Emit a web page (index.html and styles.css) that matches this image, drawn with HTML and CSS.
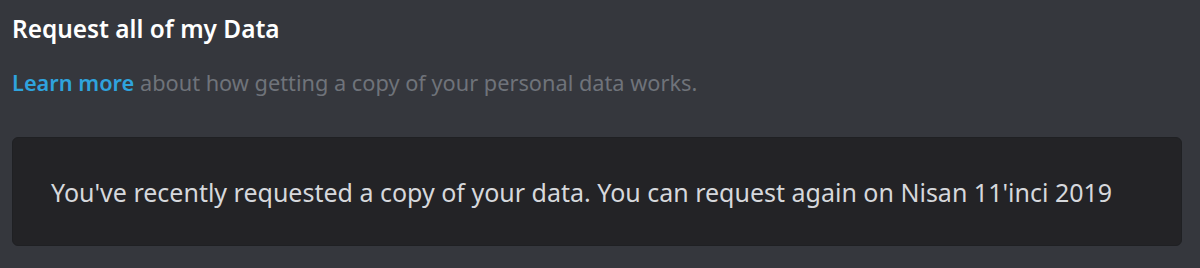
FILE: index.html
```html
<!DOCTYPE html>
<html>
<head>
<meta charset="utf-8">
<link rel="stylesheet" href="styles.css">
</head>
<body>
<div class="page">
  <h1 class="title">Request all of my Data</h1>
  <p class="desc"><a class="link">Learn more</a> about how getting a copy of your personal data works.</p>
  <div class="notice">You've recently requested a copy of your data. You can request again on Nisan 11'inci 2019</div>
</div>
</body>
</html>
```
FILE: styles.css
```css
html, body {
  margin: 0;
  padding: 0;
  background: #35373d;
  width: 1200px;
  height: 268px;
  overflow: hidden;
}
.page {
  padding: 12px 18px 0 12px;
  font-family: "Noto Sans", Lato, sans-serif;
}
.title {
  margin: 0;
  font-size: 24.4px;
  font-weight: 600;
  color: #ffffff;
  line-height: 34px;
}
.desc {
  margin: 23px 0 0 0;
  font-size: 21.75px;
  line-height: 28px;
  color: #6f737a;
}
.link {
  color: #2fa3dd;
  font-weight: 600;
}
.notice {
  margin-top: 40px;
  height: 109px;
  box-sizing: border-box;
  background: #232326;
  border: 1px solid #1f2023;
  border-radius: 6px;
  padding: 0 38px;
  display: flex;
  align-items: center;
  font-size: 25px;
  color: #d6d8dc;
}
```
